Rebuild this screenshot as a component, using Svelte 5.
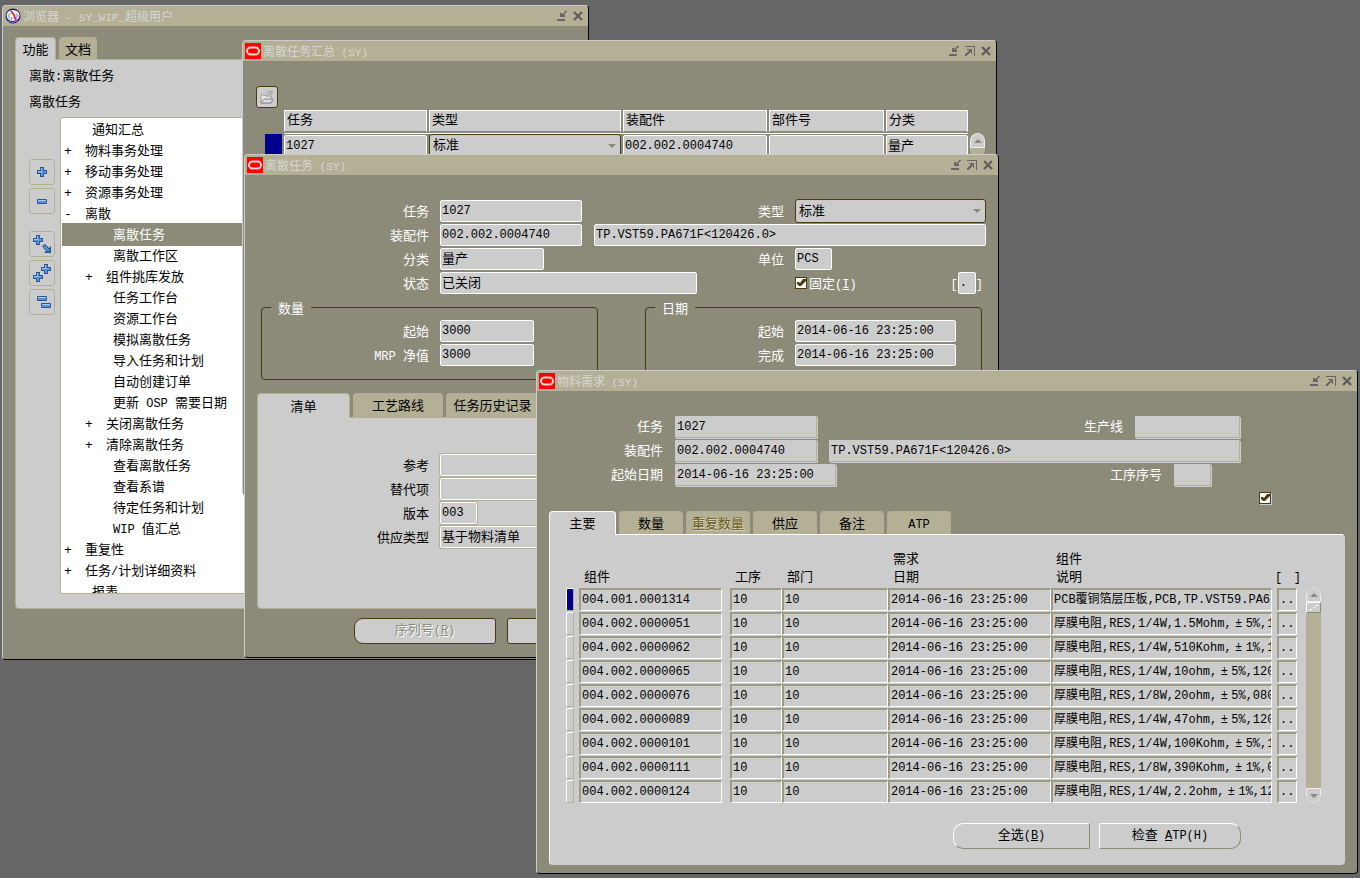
<script>
  const tree = [
    { level: 1, sign: '', text: '通知汇总' },
    { level: 1, sign: '+', text: '物料事务处理' },
    { level: 1, sign: '+', text: '移动事务处理' },
    { level: 1, sign: '+', text: '资源事务处理' },
    { level: 1, sign: '-', text: '离散' },
    { level: 2, sign: '', text: '离散任务', selected: true },
    { level: 2, sign: '', text: '离散工作区' },
    { level: 2, sign: '+', text: '组件挑库发放' },
    { level: 2, sign: '', text: '任务工作台' },
    { level: 2, sign: '', text: '资源工作台' },
    { level: 2, sign: '', text: '模拟离散任务' },
    { level: 2, sign: '', text: '导入任务和计划' },
    { level: 2, sign: '', text: '自动创建订单' },
    { level: 2, sign: '', text: '更新 OSP 需要日期' },
    { level: 2, sign: '+', text: '关闭离散任务' },
    { level: 2, sign: '+', text: '清除离散任务' },
    { level: 2, sign: '', text: '查看离散任务' },
    { level: 2, sign: '', text: '查看系谱' },
    { level: 2, sign: '', text: '待定任务和计划' },
    { level: 2, sign: '', text: 'WIP 值汇总' },
    { level: 1, sign: '+', text: '重复性' },
    { level: 1, sign: '+', text: '任务/计划详细资料' },
    { level: 1, sign: '', text: '报表' }
  ];
  const tools = [
    { name: '展开', gap: false, kind: 'plus' },
    { name: '折叠', gap: false, kind: 'minus' },
    { name: '展开分支', gap: true, kind: 'branch' },
    { name: '全部展开', gap: false, kind: 'all' },
    { name: '全部折叠', gap: false, kind: 'none' }
  ];
  const materials = [
    ['004.001.0001314', 'PCB覆铜箔层压板,PCB,TP.VST59.PA671F'],
    ['004.002.0000051', '厚膜电阻,RES,1/4W,1.5Mohm,±5%,1206'],
    ['004.002.0000062', '厚膜电阻,RES,1/4W,510Kohm,±1%,1206'],
    ['004.002.0000065', '厚膜电阻,RES,1/4W,10ohm,±5%,1206'],
    ['004.002.0000076', '厚膜电阻,RES,1/8W,20ohm,±5%,0805'],
    ['004.002.0000089', '厚膜电阻,RES,1/4W,47ohm,±5%,1206'],
    ['004.002.0000101', '厚膜电阻,RES,1/4W,100Kohm,±5%,1206'],
    ['004.002.0000111', '厚膜电阻,RES,1/8W,390Kohm,±1%,0805'],
    ['004.002.0000124', '厚膜电阻,RES,1/4W,2.2ohm,±1%,1206']
  ];
  const moment = '2014-06-16 23:25:00';
  const model = 'TP.VST59.PA671F<120426.0>';

  function runs(text) {
    return (text.match(/±|[\x20-\x7e]+|[^\x20-\x7e±]+/g) || []).map((part) => ({
      part,
      kind: part === '±' ? 'wide' : /^[\x20-\x7e]/.test(part) ? 'latin' : 'han'
    }));
  }
</script>

{#snippet mixed(text)}{#each runs(text) as r}<span class={r.kind}>{r.part}</span>{/each}{/snippet}

{#snippet cross(x, y)}
  <g transform="translate({x} {y})">
    <path d="M3 0h4v3h3v4h-3v3h-4v-3h-3v-4h3z" fill="#2a5592" />
    <path d="M4 1h2v3h3v2h-3v3h-2v-3h-3v-2h3z" fill="#5c97dc" />
    <path d="M4 1h1v3h-4v1h4v-1z" fill="#a4cdf5" />
  </g>
{/snippet}

{#snippet bar(x, y)}
  <g transform="translate({x} {y})">
    <rect width="10" height="5" rx="1" fill="#2a5592" />
    <rect x="1" y="1" width="8" height="3" fill="#5590d8" />
    <rect x="1" y="1" width="8" height="1" fill="#a4cdf5" />
  </g>
{/snippet}

{#snippet titlebar(text, globe)}
  <header class="title">
    {#if globe}
      <svg class="logo" width="16" height="16" viewBox="0 0 16 16" aria-hidden="true">
        <circle cx="8" cy="8" r="7.5" fill="#1b1b70" />
        <ellipse cx="8" cy="7.5" rx="6.5" ry="5.5" fill="#fff" />
        <path d="M2 8l3-4v8zM14 8l-3-4v8z" fill="#a9b8f2" />
        <path d="M6 3l3 4 2 6" stroke="#d8279a" stroke-width="2" fill="none" />
        <path d="M4 8l2-3M9 5l3 4" stroke="#e7c62a" stroke-width="1" />
        <path d="M6 12l1-3" stroke="#2e9c4a" stroke-width="1" />
        <path d="M3 13q5 3 10 0" stroke="#777cc8" fill="none" />
      </svg>
    {:else}
      <svg class="logo" width="16" height="16" viewBox="0 0 16 16" aria-hidden="true">
        <rect width="16" height="16" fill="#f00" />
        <rect x="2" y="4.5" width="12" height="7" rx="3.5" fill="none" stroke="#ffd2cc" stroke-width="2" />
      </svg>
    {/if}
    <h2>{@render mixed(text)}</h2>
    <div class="controls">
      <button aria-label="最小化"><svg width="10" height="10" viewBox="0 0 10 10"><path d="M0 8h8v2H0zM3 2h2v1h1v-1h1v-1h1v-1h2v1h-1v1h-1v1h-1v1h1v2H3z" fill="#666" /></svg></button>
      {#if !globe}
        <button aria-label="最大化"><svg width="10" height="10" viewBox="0 0 10 10"><path d="M0 0h10v10H9V1H0zM2 3h5v5H6V6H5v1H4v1H3v1H2v1H0V8h1V7h1V6h1V5h1V4H2z" fill="#666" /></svg></button>
      {/if}
      <button aria-label="关闭"><svg width="10" height="10" viewBox="0 0 10 10"><path d="M1 1l8 8M9 1l-8 8" stroke="#5f5f5f" stroke-width="2.4" /></svg></button>
    </div>
  </header>
{/snippet}

{#snippet field(id, value, size)}
  <input {id} class="field {size}" class:cjk={/[\u4e00-\u9fff]/.test(value)} {value} readonly />
{/snippet}

{#snippet drop(id)}
  <span class="drop">
    <select {id} aria-label="类型"><option>标准</option><option>非标准</option></select>
    <svg width="8" height="4" viewBox="0 0 8 4" aria-hidden="true"><path d="M0 0h8L4 4z" fill="#8c8b7a" /></svg>
  </span>
{/snippet}

{#snippet tick()}
  <svg class="mark" width="12" height="12" viewBox="0 0 12 12" aria-hidden="true"><path d="M2 5h2l1 1 3-4h3v2L6 9H4L2 7z" fill="#4a3b0c" /></svg>
{/snippet}

<main class="desktop">
  <section class="window navigator">
    {@render titlebar('浏览器 - SY_WIP_超级用户', true)}
    <div class="nav-body">
      <div class="tabs">
        <button class="tab active">功能</button>
        <button class="tab">文档</button>
      </div>
      <div class="panel">
        <p>{@render mixed('离散:离散任务')}</p>
        <p>离散任务</p>
        <div class="nav-main">
          <div class="tools">
            {#each tools as t}
              <button class:gap={t.gap} aria-label={t.name}>
                <svg width="24" height="24" viewBox="0 0 24 24">
                  {#if t.kind === 'plus'}
                    {@render cross(7, 7)}
                  {:else if t.kind === 'minus'}
                    {@render bar(7, 10)}
                  {:else if t.kind === 'branch'}
                    {@render cross(3, 3)}
                    <path d="M12 14l3-2 4 4 2-2v7h-7l2-2z" fill="#2a5592" />
                    <path d="M14 14l5 5" stroke="#5c97dc" stroke-width="2" />
                  {:else if t.kind === 'all'}
                    {@render cross(11, 3)}
                    {@render cross(3, 11)}
                  {:else}
                    {@render bar(7, 6)}
                    {@render bar(11, 13)}
                  {/if}
                </svg>
              </button>
            {/each}
          </div>
          <ul class="tree">
            {#each tree as n}
              <li class="level{n.level}" class:leaf={!n.sign} class:selected={n.selected}>
                {#if n.sign}<span class="sign">{n.sign}</span>{/if}
                <span>{@render mixed(n.text)}</span>
              </li>
            {/each}
          </ul>
        </div>
      </div>
    </div>
  </section>

  <section class="window summary">
    {@render titlebar('离散任务汇总 (SY)', false)}
    <div class="summary-body">
      <button class="open" aria-label="打开">
        <svg width="16" height="16" viewBox="0 0 16 16">
          <path d="M2 6h4l1 1h5v7H2z" fill="#e8e8e8" stroke="#999" />
          <path d="M2 14l3-4h9l-2 4z" fill="#ddd" stroke="#888" />
          <path d="M7 4q2-3 5-1M13 1v4h-4" fill="none" stroke="#999" />
        </svg>
      </button>
      <div class="summary-grid">
        <table>
          <colgroup><col class="c-mark" /><col class="c-job" /><col class="c-type" /><col class="c-asm" /><col class="c-part" /><col class="c-class" /></colgroup>
          <thead>
            <tr><td></td><th><span>任务</span></th><th><span>类型</span></th><th><span>装配件</span></th><th><span>部件号</span></th><th><span>分类</span></th></tr>
          </thead>
          <tbody>
            <tr>
              <td><i class="current"></i></td>
              <td><input class="field" aria-label="任务" value="1027" readonly /></td>
              <td>{@render drop('sum-type')}</td>
              <td><input class="field" aria-label="装配件" value="002.002.0004740" readonly /></td>
              <td><input class="field" aria-label="部件号" value="" readonly /></td>
              <td><input class="field cjk" aria-label="分类" value="量产" readonly /></td>
            </tr>
          </tbody>
        </table>
        <div class="scroll stub"><span class="cap"><svg width="8" height="4" viewBox="0 0 8 4"><path d="M0 4h8L4 0z" fill="#8c8b7a" /></svg></span></div>
      </div>
    </div>
  </section>

  <section class="window job">
    {@render titlebar('离散任务 (SY)', false)}
    <div class="job-body">
      <div class="form">
        <label for="j-job">任务</label>
        <div class="mid">{@render field('j-job', '1027', 'w-item')}<label for="j-type">类型</label></div>
        <div>{@render drop('j-type')}</div>
        <label for="j-asm">装配件</label>
        <div class="span2">{@render field('j-asm', '002.002.0004740', 'w-item')}<input class="field grow" aria-label="装配件说明" value={model} readonly /></div>
        <label for="j-class">分类</label>
        <div class="mid">{@render field('j-class', '量产', 'w-class')}<label for="j-uom">单位</label></div>
        <div>{@render field('j-uom', 'PCS', 'w-uom')}</div>
        <label for="j-status">状态</label>
        <div class="mid">{@render field('j-status', '已关闭', 'w-status')}</div>
        <div class="firm">
          <span class="check"><input type="checkbox" id="j-firm" checked />{@render tick()}</span>
          <label for="j-firm">固定<span class="latin">(<u>I</u>)</span></label>
          <span class="flex"><span class="latin">[</span><input class="field" aria-label="弹性域" value="." readonly /><span class="latin">]</span></span>
        </div>
      </div>
      <div class="groups">
        <fieldset class="qty">
          <legend>数量</legend>
          <div><label for="q-start">起始</label>{@render field('q-start', '3000', 'w-qty')}</div>
          <div><label for="q-mrp">{@render mixed('MRP 净值')}</label>{@render field('q-mrp', '3000', 'w-qty')}</div>
        </fieldset>
        <fieldset class="dates">
          <legend>日期</legend>
          <div><label for="d-start">起始</label>{@render field('d-start', moment, 'w-date')}</div>
          <div><label for="d-end">完成</label>{@render field('d-end', moment, 'w-date')}</div>
        </fieldset>
      </div>
      <div class="tabs">
        <button class="tab active">清单</button>
        <button class="tab">工艺路线</button>
        <button class="tab">任务历史记录</button>
      </div>
      <div class="panel">
        <div><label for="b-ref">参考</label>{@render field('b-ref', '', 'grow')}</div>
        <div><label for="b-alt">替代项</label>{@render field('b-alt', '', 'grow')}</div>
        <div><label for="b-rev">版本</label>{@render field('b-rev', '003', 'w-uom')}</div>
        <div><label for="b-sup">供应类型</label>{@render field('b-sup', '基于物料清单', 'grow')}</div>
      </div>
      <div class="buttons">
        <button class="action disabled">序列号<span class="latin">(<u>R</u>)</span></button>
        <button class="action" aria-label="更多"></button>
      </div>
    </div>
  </section>

  <section class="window material">
    {@render titlebar('物料需求 (SY)', false)}
    <div class="mat-body">
      <div class="mat-form">
        <div class="line"><label for="m-job">任务</label>{@render field('m-job', '1027', 'w-item')}<label class="right" for="m-line">生产线</label>{@render field('m-line', '', 'w-line')}</div>
        <div class="line"><label for="m-asm">装配件</label>{@render field('m-asm', '002.002.0004740', 'w-item')}<input class="field grow" aria-label="装配件说明" value={model} readonly /></div>
        <div class="line last"><label for="m-date">起始日期</label>{@render field('m-date', moment, 'w-date')}<label class="right" for="m-op">工序序号</label>{@render field('m-op', '', 'w-uom')}</div>
      </div>
      <div class="flag"><span class="check"><input type="checkbox" aria-label="弹性域" checked />{@render tick()}</span></div>
      <div class="tabs">
        <button class="tab active">主要</button>
        <button class="tab">数量</button>
        <button class="tab dim">重复数量</button>
        <button class="tab">供应</button>
        <button class="tab">备注</button>
        <button class="tab"><span class="latin">ATP</span></button>
      </div>
      <div class="panel">
        <div class="mat-grid">
          <table>
            <colgroup><col class="k-mark" /><col class="k-item" /><col class="k-op" /><col class="k-dept" /><col class="k-date" /><col class="k-desc" /><col class="k-flex" /></colgroup>
            <thead>
              <tr><td></td><th>组件</th><th>工序</th><th>部门</th><th>需求<br />日期</th><th>组件<br />说明</th><th class="brackets"><span><b>[</b><b>]</b></span></th></tr>
            </thead>
            <tbody>
              {#each materials as [code, desc], i}
                <tr>
                  <td><i class:current={i === 0}></i></td>
                  <td><span class="cell item">{code}</span></td>
                  <td><span class="cell">10</span></td>
                  <td><span class="cell">10</span></td>
                  <td><span class="cell">{moment}</span></td>
                  <td><span class="cell desc">{@render mixed(desc)}</span></td>
                  <td><span class="cell">..</span></td>
                </tr>
              {/each}
            </tbody>
          </table>
          <div class="scroll">
            <span class="cap"><svg width="8" height="4" viewBox="0 0 8 4"><path d="M0 4h8L4 0z" fill="#8c8b7a" /></svg></span>
            <span class="thumb"><svg width="13" height="9" viewBox="0 0 13 9"><path d="M3 6h2v2H3zM6 4h2v2H6zM9 2h2v2H9z" fill="#fff" /><path d="M4 7h1v1H4zM7 5h1v1H7zM10 3h1v1h-1z" fill="#b3b095" /></svg></span>
            <span class="cap end"><svg width="8" height="4" viewBox="0 0 8 4"><path d="M0 0h8L4 4z" fill="#8c8b7a" /></svg></span>
          </div>
        </div>
        <div class="buttons">
          <button class="action">全选<span class="latin">(<u>B</u>)</span></button>
          <button class="action">检查<span class="latin">&nbsp;<u>A</u>TP(H)</span></button>
        </div>
      </div>
    </div>
  </section>
</main>

<style>
  :global(body) { margin: 0; background: #666; }
  * { box-sizing: border-box; }
  .desktop {
    --olive: #8c8b7a;
    --khaki: #b3b095;
    --gray: #ccc;
    --brown: #4a3b0c;
    position: relative;
    min-height: 100vh;
    overflow: hidden;
    background: #666;
    color: #000;
    font: 13px/20px "Liberation Mono", "Noto Sans CJK SC", monospace;
  }
  button, input, select { font: inherit; color: inherit; margin: 0; padding: 0; border: 0; border-radius: 0; background: none; }
  p, h2, ul { margin: 0; padding: 0; }
  svg { display: block; }
  i { display: block; }
  label { white-space: nowrap; }
  .latin { font-size: 12px; white-space: pre; }
  .wide { display: inline-block; width: 14px; text-align: center; }

  .window {
    position: absolute;
    background: var(--olive);
    border: 1px solid;
    border-color: var(--gray) #000 #000 var(--gray);
    border-radius: 4px;
    overflow: hidden;
  }
  .navigator { left: 2px; top: 5px; width: 587px; }
  .summary { left: 242px; top: 40px; width: 755px; }
  .job { left: 244px; top: 154px; width: 755px; }
  .material { left: 536px; top: 370px; width: 822px; }

  .title { display: flex; align-items: center; height: 20px; padding: 0 5px 0 2px; background: var(--khaki); color: #d6d6d6; }
  .title h2 { flex: 1; margin-left: 2px; padding-top: 4px; font-size: 12px; font-weight: 400; line-height: 20px; }
  .title .latin { font-size: 11px; }
  .controls { display: flex; gap: 6px; }

  .tabs { display: flex; gap: 3px; }
  .tab { height: 24px; padding: 4px 0 0; color: #000; background: var(--khaki); border-radius: 4px 4px 0 0; text-align: center; white-space: nowrap; }
  .tab.active { position: relative; z-index: 1; margin-bottom: -1px; padding-top: 3px; background: var(--gray); border: 1px solid var(--khaki); border-bottom: 0; }
  .tab.dim { color: #6b5a1c; text-shadow: 1px 1px 0 #ddd9c0; }
  .panel { background: var(--gray); border: 1px solid var(--khaki); border-radius: 0 4px 4px 4px; }

  .field { display: block; min-width: 0; height: 22px; padding: 0 1px; background: var(--gray); border: 1px solid #fff; border-radius: 2px; font-size: 12px; line-height: 20px; color: #000; }
  .field.cjk { padding: 0 1px 3px; font-size: 13px; line-height: 17px; }
  .grow { flex: 1; }
  .w-item { width: 142px; }
  .w-class { width: 104px; }
  .w-uom { width: 37px; }
  .w-status { width: 257px; }
  .w-qty { width: 94px; }
  .w-date { width: 161px; }
  .w-line { width: 105px; }

  .drop { position: relative; display: block; }
  .drop select { display: block; appearance: none; width: 100%; height: 24px; padding: 1px 3px 0; color: #000; background: var(--gray); border: 1px solid var(--brown); border-radius: 3px; }
  .drop svg { position: absolute; right: 5px; top: 10px; pointer-events: none; }

  .check { position: relative; display: block; width: 12px; height: 12px; }
  .check input { display: block; appearance: none; width: 12px; height: 12px; background: #fff; border: 1px solid var(--brown); }
  .mark { position: absolute; left: 0; top: 0; pointer-events: none; }

  .action { height: 26px; background: var(--gray); border: 1px solid var(--brown); border-radius: 3px; color: #000; }

  /* navigator */
  .nav-body { padding: 11px 12px 50px; }
  .nav-body .tab { height: 22px; width: 38px; }
  .nav-body .tab.active { width: 41px; height: 23px; }
  .nav-body .panel { padding: 4px 13px 14px; }
  .nav-body p { line-height: 25px; }
  .nav-main { display: flex; gap: 5px; margin-top: 2px; }
  .tools { display: flex; flex-direction: column; gap: 3px; padding-top: 42px; }
  .tools button { width: 26px; height: 26px; border: 1px solid var(--khaki); border-radius: 3px; }
  .tools .gap { margin-top: 14px; }
  .tree { flex: 1; height: 477px; overflow: hidden; padding: 2px 0 0 1px; list-style: none; background: #fff; border: 1px solid var(--khaki); border-radius: 3px; }
  .tree li { display: flex; height: 21px; padding-left: 2px; line-height: 21px; white-space: nowrap; }
  .sign { width: 21px; }
  .tree .level2 { padding-left: 23px; }
  .tree .leaf { padding-left: 30px; }
  .tree .level2.leaf { padding-left: 51px; }
  .tree .selected { background: var(--olive); box-shadow: 0 -2px 0 var(--olive); color: #fff; }

  /* job summary */
  .summary-body { min-height: 433px; padding: 25px 10px 0 13px; }
  .open { display: grid; place-items: center; width: 22px; height: 22px; background: var(--gray); border: 1px solid var(--brown); border-radius: 3px; }
  .summary-grid { display: flex; gap: 2px; margin: 2px 0 0 9px; }
  table { border-collapse: collapse; table-layout: fixed; }
  th, td { padding: 0; font-weight: 400; text-align: left; }
  .summary table { width: 703px; }
  .c-mark { width: 19px; }
  .c-job { width: 145px; }
  .c-type { width: 194px; }
  .c-asm { width: 146px; }
  .c-part { width: 117px; }
  .c-class { width: 82px; }
  .summary th { padding-right: 2px; border-bottom: 1px solid #fff; }
  .summary th span { display: block; height: 22px; padding-left: 2px; line-height: 20px; background: var(--gray); border: 1px solid; border-color: #fff #fff var(--olive) #fff; }
  .summary thead tr { height: 23px; }
  .summary td { padding-right: 2px; }
  .summary tr > :last-child { padding-right: 0; }
  .summary td .field { width: 100%; }
  .summary .current { width: 17px; height: 22px; background: #00008a; }

  .scroll { display: flex; flex-direction: column; width: 15px; background: var(--khaki); border-radius: 8px; overflow: hidden; }
  .scroll.stub { margin-top: 23px; }
  .cap { display: grid; place-items: center; height: 15px; background: var(--gray); border: 1px solid #eee; border-radius: 8px 8px 0 0; }
  .cap.end { margin-top: auto; border-radius: 0 0 8px 8px; }
  .thumb { height: 11px; background: var(--gray); border: 1px solid; border-color: #fff var(--olive) var(--olive) #fff; }

  /* job */
  .job-body { padding: 24px 12px 13px; color: #fff; }
  .job-body label { padding-top: 4px; }
  .form { display: grid; grid-template-columns: 172px 1fr 191px; column-gap: 11px; grid-auto-rows: 24px; align-items: center; }
  .form > label { text-align: right; }
  .mid { display: flex; justify-content: space-between; align-items: center; }
  .span2 { grid-column: span 2; display: flex; gap: 12px; }
  .firm { display: flex; align-items: center; gap: 2px; }
  .flex { display: flex; align-items: center; margin: 0 3px 0 auto; }
  .flex .field { width: 18px; }
  .flex .latin { padding-top: 4px; }
  .groups { display: flex; gap: 47px; margin: 0 4px; }
  fieldset { flex: 1; min-width: 0; margin: 0; padding: 0 0 12px; border: 1px solid var(--brown); border-radius: 4px; }
  legend { margin-left: 9px; padding: 6px 7px 0; line-height: 18px; }
  fieldset div, .job .panel div { display: flex; align-items: center; gap: 11px; height: 24px; }
  fieldset label, .job .panel label { text-align: right; }
  .qty label { width: 167px; }
  .dates label { width: 138px; }
  .job .tabs { margin-top: 13px; }
  .job .tab { width: 90px; }
  .job .tab:last-child, .job .tab.active { width: 93px; }
  .job .tab.active { height: 25px; }
  .job .panel { padding: 35px 12px 59px 0; color: #000; }
  .job .panel label { width: 171px; }
  .job .panel .field { box-shadow: 0 0 0 1px var(--khaki); }
  .job .buttons { display: flex; gap: 11px; margin: 9px 0 0 97px; }
  .job .action { width: 142px; }
  .job .action:first-child { border-radius: 9px 3px 3px 9px; }
  .job .disabled { color: var(--olive); text-shadow: 1px 1px 0 #fff; }

  /* material requirements */
  .mat-body { padding: 24px 12px 8px; }
  .mat-form { padding-right: 105px; color: #fff; }
  .line { display: flex; align-items: center; gap: 12px; height: 24px; }
  .line label { width: 114px; padding-top: 2px; text-align: right; }
  .line label.right { width: auto; margin-left: auto; }
  .line.last { padding-right: 29px; }
  .mat-form .field { border-color: var(--gray) var(--khaki) var(--khaki) var(--gray); border-radius: 0 1px 1px 0; box-shadow: 1px 1px 0 var(--gray); }
  .flag { display: flex; justify-content: flex-end; padding: 5px 74px 7px 0; }
  .flag .check { box-shadow: 1px 1px 0 var(--gray); }
  .material .tab { width: 64px; height: 23px; }
  .material .tab.active { width: 67px; height: 24px; margin-right: 0; border-color: #fff; }
  .material .panel { padding: 16px 21px 15px 16px; border-color: #fff var(--gray) var(--gray) #fff; }
  .mat-grid { display: flex; gap: 9px; }
  .mat-grid table { width: 731px; }
  .k-mark { width: 13px; }
  .k-item { width: 151px; }
  .k-op { width: 52px; }
  .k-dept { width: 106px; }
  .k-date { width: 163px; }
  .k-flex { width: 20px; }
  .material th { padding-left: 5px; vertical-align: bottom; line-height: 18px; }
  .material th.brackets { padding: 0; font-size: 12px; }
  .brackets span { display: flex; justify-content: space-between; width: 26px; margin-left: -2px; }
  .brackets b { font-weight: 400; }
  .material tbody tr { height: 24px; }
  .material td i { width: 8px; height: 23px; border: 1px solid; border-color: #fff var(--khaki) var(--khaki) #fff; border-radius: 2px; }
  .material td i.current { background: #00008a; }
  .cell { display: block; height: 23px; padding-left: 1px; overflow: hidden; font-size: 12px; line-height: 20px; white-space: nowrap; border: 1px solid; border-width: 2px 1px 1px 2px; border-color: #9d9b85 #fff #fff #9d9b85; border-radius: 0 1px 1px 1px; }
  .cell.item { width: 143px; }
  .cell.desc { width: calc(100% - 5px); }
  .mat-grid .scroll { margin-top: 36px; }
  .material .buttons { display: flex; justify-content: flex-end; gap: 9px; margin-top: 20px; padding-right: 82px; }
  .material .action { width: 137px; border-color: #fff var(--olive) var(--olive) #fff; border-radius: 10px 2px 2px 10px; }
  .material .action:last-child { width: 142px; border-radius: 2px 10px 10px 2px; }
</style>
